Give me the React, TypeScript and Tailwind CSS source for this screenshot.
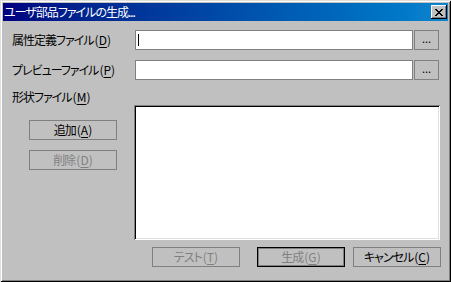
const font = "font-['Noto_Sans_CJK_JP','Noto_Sans',sans-serif] [font-feature-settings:'palt'] tracking-[-1px]";

function Key({ k }: { k: string }) {
  return (
    <span className="ml-[1px] tracking-normal">
      (<span className="underline underline-offset-[2px]">{k}</span>)
    </span>
  );
}

function Button({ children, disabled, isDefault, className = '' }: { children: React.ReactNode; disabled?: boolean; isDefault?: boolean; className?: string }) {
  return (
    <div
      className={`flex h-[20px] w-[88px] items-center justify-center bg-[#c0c0c0] text-[12px] leading-none ${isDefault ? 'border border-black shadow-[inset_0_0_0_1px_#808080]' : 'border border-[#808080]'} ${disabled ? 'text-[#808080]' : 'text-black'} ${className}`}
    >
      {children}
    </div>
  );
}

function FileRow({ label, k, caret, className = '' }: { label: string; k: string; caret?: boolean; className?: string }) {
  return (
    <div className={`flex h-[20px] items-center ${className}`}>
      <div className="w-[123px] text-[12px] leading-none text-black">
        {label}
        <Key k={k} />
      </div>
      <div className="relative h-[20px] w-[278px] border border-[#808080] bg-white">
        {caret && <div className="absolute left-[2px] top-[3px] h-[12px] w-[1px] bg-black" />}
      </div>
      <div className="ml-[1px] flex h-[20px] w-[25px] items-center justify-center border border-[#808080] bg-[#c0c0c0] pb-[3px] text-[11px] leading-none tracking-normal text-black">
        ...
      </div>
    </div>
  );
}

export default function App() {
  return (
    <div className={`${font} flex h-[282px] w-[451px] flex-col bg-[#c0c0c0] p-[3px] shadow-[inset_1px_1px_0_#dfdfdf,inset_-1px_-1px_0_#000,inset_2px_2px_0_#fff,inset_-2px_-2px_0_#808080]`}>
      <div className="flex h-[18px] items-center justify-between bg-gradient-to-r from-[#000080] to-[#1084d0] pl-[1px] pr-[1px]">
        <span className="text-[12px] leading-none text-white">ユーザ部品ファイルの生成...</span>
        <div className="flex h-[14px] w-[16px] items-center justify-center bg-[#c0c0c0] shadow-[inset_-1px_-1px_0_#000,inset_1px_1px_0_#fff,inset_-2px_-2px_0_#808080]">
          <svg width="8" height="7" viewBox="0 0 8 7" shapeRendering="crispEdges">
            <path d="M0 0h2v1h-2zM6 0h2v1h-2zM1 1h2v1h-2zM5 1h2v1h-2zM2 2h4v1h-4zM3 3h2v1h-2zM2 4h4v1h-4zM1 5h2v1h-2zM5 5h2v1h-2zM0 6h2v1h-2zM6 6h2v1h-2z" fill="#000" />
          </svg>
        </div>
      </div>

      <div className="flex flex-col pl-[9px] pt-[9px]">
        <FileRow label="属性定義ファイル" k="D" caret />
        <FileRow label="プレビューファイル" k="P" className="mt-[10px]" />
        <div className="mt-[9px] h-[16px] text-[12px] leading-[16px] text-black">
          形状ファイル<Key k="M" />
        </div>
        <div className="flex">
          <div className="flex w-[122px] flex-col pl-[17px] pt-[15px]">
            <Button>
              追加<Key k="A" />
            </Button>
            <Button disabled className="mt-[10px]">
              削除<Key k="D" />
            </Button>
          </div>
          <div className="h-[135px] w-[306px] bg-white shadow-[inset_1px_1px_0_#808080,inset_-1px_-1px_0_#fff,inset_2px_2px_0_#000,inset_-2px_-2px_0_#dfdfdf]" />
        </div>
        <div className="mt-[7px] flex pl-[140px]">
          <Button disabled>
            テスト<Key k="T" />
          </Button>
          <Button disabled isDefault className="ml-[17px]">
            生成<Key k="G" />
          </Button>
          <Button className="ml-[8px]">
            キャンセル<Key k="C" />
          </Button>
        </div>
      </div>
    </div>
  );
}
